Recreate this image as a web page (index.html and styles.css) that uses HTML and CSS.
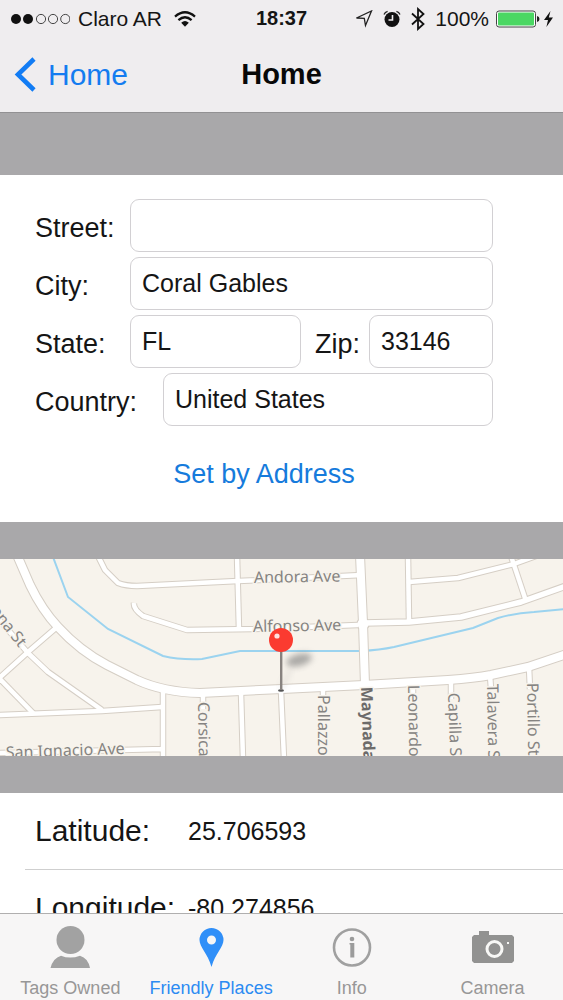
FILE: index.html
```html
<!DOCTYPE html>
<html lang="en">
<head>
<meta charset="utf-8">
<meta name="viewport" content="width=device-width, initial-scale=1">
<title>Home</title>
<link rel="stylesheet" href="styles.css">
</head>
<body>
<div class="app">
  <header class="top">
    <div class="status">
      <div class="status-left">
        <svg class="signal" width="60" height="12" viewBox="0 0 60 12" aria-hidden="true">
          <circle cx="6" cy="6" r="5" fill="#111"/><circle cx="18" cy="6" r="5" fill="#111"/>
          <g fill="none" stroke="#333" stroke-width="0.9"><circle cx="31" cy="6" r="4.600"/><circle cx="43" cy="6" r="4.600"/><circle cx="55.300" cy="6" r="4.600"/></g>
        </svg>
        <span>Claro AR</span>
        <svg class="wifi" width="22" height="16" viewBox="0 0 22 16" aria-hidden="true">
          <g fill="none" stroke="#111" stroke-width="2.300"><path d="M1 5.600Q11-3 21 5.600"/><path d="M4.400 9.200Q11 3.400 17.600 9.200"/></g>
          <path d="M7.200 11.700Q11 8.500 14.800 11.700L11 15.700Z" fill="#111"/>
        </svg>
      </div>
      <time class="clock">18:37</time>
      <div class="status-right">
        <svg width="18" height="18" viewBox="0 0 18 18" aria-hidden="true"><path d="M1.500 8L16.500 1L10.500 15.500L9.300 8.300Z" fill="none" stroke="#222" stroke-width="1.300" stroke-linejoin="miter"/></svg>
        <svg width="18" height="18" viewBox="0 0 18 18" aria-hidden="true"><circle cx="9" cy="9.500" r="7.500" fill="#111"/><path d="M9.500 5V10H5.500" fill="none" stroke="#efedef" stroke-width="1.600"/><path d="M1 4.500Q2 1.800 4.600 1.300M17 4.500Q16 1.800 13.400 1.300" fill="none" stroke="#222" stroke-width="1.300"/></svg>
        <svg width="14" height="24" viewBox="0 0 14 24" aria-hidden="true"><path d="M1 6.500L12.500 17L7 22V2L12.500 7L1 17.500" fill="none" stroke="#111" stroke-width="1.800"/></svg>
        <span>100%</span>
        <svg width="44" height="18" viewBox="0 0 44 18" aria-hidden="true"><rect x="0.500" y="1" width="39" height="16" rx="2.500" fill="#fff" stroke="#444"/><rect x="2" y="2.500" width="36" height="13" rx="1" fill="#4bd763"/><path d="M41 6Q43.500 6.500 43.500 9T41 12Z" fill="#222"/></svg>
        <svg width="9" height="16" viewBox="0 0 9 16" aria-hidden="true"><path d="M6.500 0L0 9H4L2.400 16L9 6.600H4.800Z" fill="#111"/></svg>
      </div>
    </div>
    <div class="navbar">
      <a class="back" href="#">
        <svg width="22" height="36" viewBox="0 0 22 36" aria-hidden="true"><path d="M20 2L4 17.500L20 33" fill="none" stroke="#127cf4" stroke-width="4.600"/></svg>
        <span>Home</span>
      </a>
      <h1 class="title">Home</h1>
    </div>
  </header>

  <main class="content">
    <form class="card">
      <div class="row">
        <label class="label" for="street">Street:</label>
        <input class="field" id="street" type="text" value="">
      </div>
      <div class="row">
        <label class="label" for="city">City:</label>
        <input class="field" id="city" type="text" value="Coral Gables">
      </div>
      <div class="row">
        <label class="label" for="state">State:</label>
        <input class="field" id="state" type="text" value="FL">
        <label class="label label-zip" for="zip">Zip:</label>
        <input class="field field-zip" id="zip" type="text" value="33146">
      </div>
      <div class="row">
        <label class="label label-wide" for="country">Country:</label>
        <input class="field" id="country" type="text" value="United States">
      </div>
      <button class="set" type="button">Set by Address</button>
    </form>

    <svg class="map" viewBox="0 0 563 197" preserveAspectRatio="xMidYMid slice" role="img" aria-label="Map of Coral Gables">
      <defs>
        <filter id="soft" x="-50%" y="-50%" width="200%" height="200%"><feGaussianBlur stdDeviation="3"/></filter>
        <g id="minor">
          <path d="M98-3L105 11L118 24Q126 27 137 27L238 22L362 16"/>
          <path d="M237-3L239 71"/>
          <path d="M134 44Q133 50 143 57L187 71L253 70L358 66"/>
          <path d="M408-3L409 63"/>
          <path d="M409 23L458 19L514 5L536-3"/>
          <path d="M511-3L526 42"/>
          <path d="M57 68L28 93L-3 121"/>
          <path d="M-3 58L28 94L48 113L102 151"/>
          <path d="M-1 119L34 155"/>
          <path d="M-3 156L102 152L162 148"/>
          <path d="M163 130V200M-3 194L163 190"/>
          <path d="M203 134V150M241 134L243 200M281 132L284 200M323 130V140M413 124V134M451 121V140M490 116L491 130M529 108L530 130"/>
        </g>
        <g id="mid"><path d="M364 64L409 63L461 58L521 43L566 27"/></g>
        <g id="major">
          <path d="M17-4L30 26Q42 51 58 68Q80 92 107 106L137 121Q163 133 200 134L282 130L364 126L448 121Q475 119 491 116L528 108L567 95"/>
          <path d="M360-4L363 64L365 126"/>
        </g>
      </defs>
      <rect width="563" height="197" fill="#f7f3ec"/>
      <path d="M53-2L68 38L108 70L163 97Q180 101 202 100L240 92H361Q380 91 394 88L473 69L498 59Q515 54 534 53L565 50" fill="none" stroke="#9bd3ef" stroke-width="2"/>
      <g fill="none" stroke="#d5cec5" stroke-linejoin="round">
        <use href="#minor" stroke-width="6.500"/><use href="#mid" stroke-width="7.500"/><use href="#major" stroke-width="10"/>
        <circle cx="363" cy="65" r="6" stroke-width="1.500"/>
      </g>
      <g fill="none" stroke="#fff" stroke-linejoin="round">
        <use href="#minor" stroke-width="4.500"/><use href="#mid" stroke-width="5.500"/><use href="#major" stroke-width="8"/>
        <circle cx="363" cy="65" r="3" stroke-width="5"/>
      </g>
      <g class="streets">
        <text transform="translate(254 24) rotate(-1)">Andora Ave</text>
        <text transform="translate(253 73) rotate(-1)">Alfonso Ave</text>
        <text transform="translate(6 199) rotate(-2)">San Ignacio Ave</text>
        <text transform="translate(19 89) rotate(52)" text-anchor="end">Cadagena St</text>
        <text transform="translate(198 143) rotate(89)">Corsica</text>
        <text transform="translate(318 136) rotate(90)">Pallazzo</text>
        <text class="strong" transform="translate(361 128) rotate(88)">Maynada</text>
        <text transform="translate(408 126) rotate(89)">Leonardo</text>
        <text transform="translate(448 134) rotate(88)">Capilla St</text>
        <text transform="translate(487 125) rotate(89)">Talavera St</text>
        <text transform="translate(527 124) rotate(89)">Portillo St</text>
      </g>
      <ellipse cx="299" cy="101" rx="13" ry="6" transform="rotate(-15 299 101)" fill="#777" opacity="0.600" filter="url(#soft)"/>
      <path d="M281 131L290 111" stroke="#999" stroke-width="2" opacity="0.400" filter="url(#soft)"/>
      <ellipse cx="281" cy="131.500" rx="3" ry="1.300" fill="#555"/>
      <rect x="280" y="91" width="2.400" height="40" fill="#87827f"/>
      <circle cx="281" cy="81" r="12" fill="#fb3b30"/>
      <circle cx="277" cy="77" r="2.600" fill="#ffe1df"/>
    </svg>

    <dl class="coords">
      <div class="coord"><dt>Latitude:</dt><dd>25.706593</dd></div>
      <div class="coord"><dt>Longitude:</dt><dd>-80.274856</dd></div>
    </dl>
  </main>

  <nav class="tabs">
    <a class="tab" href="#">
      <svg width="42" height="42" viewBox="0 0 42 42" aria-hidden="true"><g fill="#a2a2a2"><circle cx="21.500" cy="14" r="14"/><path d="M1.500 42Q4 32 12 29.700Q21 33.500 31 29.700Q39 32 41 42Z"/></g></svg>
      <span>Tags Owned</span>
    </a>
    <a class="tab tab-on" href="#" aria-current="page">
      <svg width="42" height="42" viewBox="0 0 42 42" aria-hidden="true"><path fill-rule="evenodd" fill="#308ff8" d="M21.500 2A12 12 0 0 1 33.500 14C33.500 21 25.500 27 21.500 41C17.500 27 9.500 21 9.500 14A12 12 0 0 1 21.500 2ZM21.500 9.500A4.500 4.500 0 1 0 21.500 18.500A4.500 4.500 0 1 0 21.500 9.500Z"/></svg>
      <span>Friendly Places</span>
    </a>
    <a class="tab" href="#">
      <svg width="42" height="42" viewBox="0 0 42 42" aria-hidden="true"><circle cx="21" cy="21.500" r="18" fill="none" stroke="#a0a0a0" stroke-width="2.600"/><circle cx="21" cy="13" r="2.300" fill="#9b9b9b"/><path d="M18.500 17H23.300V31.500H19.300V18.500H18.500Z" fill="#9b9b9b"/></svg>
      <span>Info</span>
    </a>
    <a class="tab" href="#">
      <svg width="42" height="42" viewBox="0 0 42 42" aria-hidden="true"><path d="M2 9H7V5H17V9H40L42 11V35L40 37H2L0 35V11Z" fill="#929291"/><circle cx="22.500" cy="23" r="7.500" fill="none" stroke="#f8f8f6" stroke-width="3"/><rect x="35" y="16" width="2" height="2" fill="#f8f8f6"/></svg>
      <span>Camera</span>
    </a>
  </nav>
</div>
</body>
</html>
```
FILE: styles.css
```css
* { box-sizing: border-box; }

body {
  margin: 0;
  font-family: "Liberation Sans", Arial, sans-serif;
  color: #151515;
}

a { color: inherit; text-decoration: none; }
svg { display: block; flex: none; }

.app {
  display: flex;
  flex-direction: column;
  height: 100vh;
  overflow: hidden;
}

.top {
  flex: none;
  background: #efedef;
  border-bottom: 1px solid #929193;
}

.status {
  display: grid;
  grid-template-columns: 1fr auto 1fr;
  align-items: center;
  height: 37px;
  padding: 0 10px;
  font-size: 21px;
}

.status-left, .status-right { display: flex; align-items: center; }
.status-left { gap: 8px; }
.wifi { margin-left: 4px; }
.status-right { justify-content: flex-end; gap: 10px; }
.status-right span { margin-right: -3px; }
.status-right svg:last-child { margin-left: -6px; }
.clock { font-size: 20px; font-weight: bold; }

.navbar {
  display: grid;
  grid-template-columns: 1fr auto 1fr;
  align-items: center;
  height: 75px;
  padding: 0 14px;
}

.back {
  display: flex;
  align-items: center;
  gap: 12px;
  font-size: 30px;
  color: #147cf0;
}

.title { margin: 0; font-size: 29px; font-weight: bold; color: #080808; }

.content {
  flex: 1;
  min-height: 0;
  display: flex;
  flex-direction: column;
  gap: 37px;
  padding-top: 62px;
  overflow: hidden;
  background: #a9a8aa;
}

.content > * { flex: none; }

.card {
  display: flex;
  flex-direction: column;
  gap: 5px;
  padding: 24px 70px 28px 35px;
  background: #fff;
}

.row { display: flex; align-items: center; }

.label {
  flex: none;
  width: 95px;
  padding-top: 4px;
  font-size: 27px;
  line-height: 32px;
}

.label-wide { width: 128px; }
.label-zip { width: 68px; padding-left: 14px; }

.field {
  flex: 1;
  min-width: 0;
  height: 53px;
  padding: 0 11px;
  border: 1px solid #d2d0d3;
  border-radius: 9px;
  background: #fff;
  font: inherit;
  font-size: 25px;
  color: #151515;
}

.field-zip { flex: 0 0 124px; }

.set {
  align-self: center;
  height: 40px;
  margin-top: 23px;
  padding: 0;
  border: 0;
  background: none;
  font: inherit;
  font-size: 27px;
  color: #167bdc;
}

.map { width: 100%; height: 197px; }

.streets {
  font-family: "Noto Sans", "Open Sans", sans-serif;
  font-size: 16px;
  fill: #858381;
  stroke: #f7f3ec;
  stroke-width: 3px;
  stroke-linejoin: round;
  paint-order: stroke;
}

.strong { font-weight: bold; fill: #6d6b6a; }

.coords { margin: 0; padding-left: 25px; background: #fff; }

.coord {
  display: flex;
  align-items: center;
  height: 77px;
  padding-left: 10px;
  border-bottom: 1px solid #cfcfcf;
}

.coord dt { width: 153px; font-size: 30px; }
.coord dd { margin: 0; font-size: 25px; }

.tabs {
  flex: none;
  display: grid;
  grid-template-columns: repeat(4, 1fr);
  padding: 12px 0 2px;
  border-top: 1px solid #b0afaf;
  background: #f7f6f6;
}

.tab {
  display: flex;
  flex-direction: column;
  align-items: center;
  gap: 10px;
  font-size: 18px;
  line-height: 20px;
  color: #979797;
}

.tab-on { color: #2c8bf2; }
```
